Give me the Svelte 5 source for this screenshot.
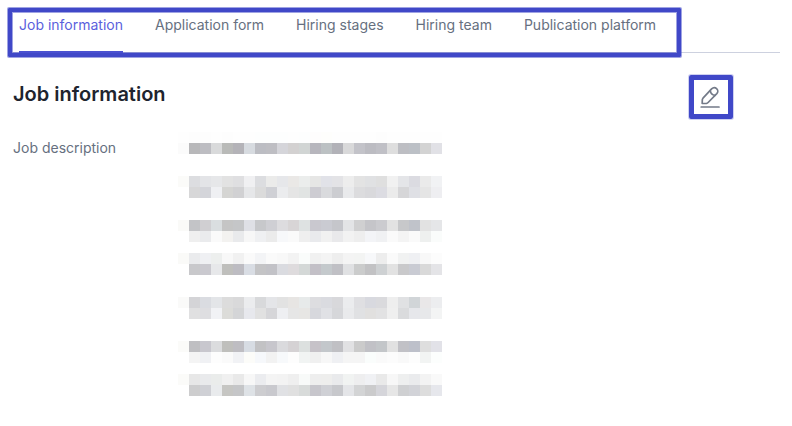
<script>
  let active = 'Job information';

  const tabs = [
    'Job information',
    'Application form',
    'Hiring stages',
    'Hiring team',
    'Publication platform'
  ];

  const cell = 11;
  const columns = 24;

  // Redacted description: each entry is one row of cells, keyed by its row index.
  const blocks = [
    { row: 0, colors: 'fefefe fdfdfd fdfdfd fefefe fdfdfd fefefe fefefe fdfefe fdfefe fdfefe fefefe fdfefe fefdfd fefefc fefefe fefefe fefefe fefefe fdfdfd fefefe fefefe fefefe fefefe fefefe' },
    { row: 1, colors: 'fbfbfb b8b8ba bdbdc2 d9dadb b9bab8 b4b3b8 d7dbe0 bcbdc3 bebec3 d5d5da d3d1d1 d1d5d4 b7b6bd bcc1c3 b2b2b8 d9d9da c3c3c9 bcbcc2 c0c0c6 dedede bdbec3 bcc0c6 d3d3d3 e1e1e6' },
    { row: 4, colors: 'fbfbf9 dcdde0 e3e4e7 e6e7e9 e2e2e2 dfdfe1 f0f0f2 dcdde0 ebebea e6e7ea eae8e6 ebedec e6e6e5 e1e2e8 e3e3e6 ededed e3e3e3 e0e1e3 dfdfdf f1f1f1 e4e5e8 dbdbe1 eaeaea f1f2f4' },
    { row: 5, colors: 'ffffff d7d7d8 d4d5da eff0f3 d5d5d3 d1d1d3 e6e7e9 dbdbdb cfd0d5 ebecee e5e5e5 e1e4e3 cdccd2 d9dadd cccdd1 e9eaec dcdcde d9d9dc dcdce2 ebebeb d6d6d8 dfe0e5 e5e5e5 eeeef1' },
    { row: 8, colors: 'fafaf8 c3c4c7 d0cfd2 dadee0 c5c5c5 c5c6c8 dfe0e6 c7c8cb cfcfd4 dddcdf d8d5d6 dee2e2 c9c8cf cacbd2 c5c6cb e3e4e6 d0d0d1 c5c5c9 cbcbcf e2e2e2 c7c8ca c0c3ca e2e2e2 e5e6e8' },
    { row: 9, colors: 'ffffff efefef eaebed fafafa f3f2f0 e9eaec f7f7f7 eff0f2 ebebeb f7f8fa fafafa efefef e9eaed f1f1f1 e9e9eb f2f2f2 eeeeee f3f4f7 f0f1f3 fafafa f4f4f4 fafafa eef0ef fafcfb' },
    { row: 11, colors: 'fafaf8 eaebed eff0f3 edefee f8f8f8 f1f1f1 fafafa f3f4f6 fafafa f8f8f8 f3f3f3 fafcfb f1f1f1 f4f4f4 eeeeee f4f4f4 f3f4f3 f7f8fa ededed fafafa f1f2f2 eff0f3 f8f8f8 fcfcfc' },
    { row: 12, colors: 'ffffff c8c8cb cac9cf e7e8ea bfbfbc bdbcc2 d9dde4 c4c4c6 c2c2c7 dadbe0 dedbdd d4d8d7 c3c0c7 c4c9cc c0c0c5 e0e1e3 cbcccc c2c2c4 ced1d3 e2e2e2 c9c9cb c9cbd3 d9d9d9 e4e4e7' },
    { row: 15, colors: 'fafaf9 d4d4d7 dadce1 e3e5e8 dcdcdc d9d9da ebecee d8d9db e4e5e8 e2e2e2 e7e5e3 e7eaea dddde0 dadbe0 d8d8db ebecee dfdfe2 d8d9df dadadd eeeeee e0e1e3 d1d5d8 e9e7e8 ecedef' },
    { row: 16, colors: 'ffffff e0e0e1 dedee1 f1f2f5 dcdcd9 d4d5d7 e7e8ed e1e1e1 d6d6d9 eeeff2 e6e6e6 e7e6e4 d7d8dd e0e1e5 d6d7da e9eaec e0e1e3 e1e0df e2e2e3 efefef dadbdd e6e7eb e7e8ea f3f4f4' },
    { row: 19, colors: 'fbfbf9 bfbfc2 c8c7ce dbdcde bfbfbc bebdc2 d7dce3 c2c2c4 c7c6cc dadadd d5d2d4 dce0df c6c2c8 c3c7cb c0c0c4 e1e1e3 cbcbcb c1c1c6 c3c6c9 e1e1e1 c1c1c6 bdc0ca dedede e2e2e8' },
    { row: 20, colors: 'ffffff f4f4f4 f0f1f4 fdfdfd fafafa f1f2f5 fcfcf9 f6f8fb f2f2f2 f7f9fb fdfdfd f1f4f3 f0f0f0 f7f7f7 eff0f3 f5f5f5 f5f5f5 fafdfc fafafa fcfcfc f9f9f9 fdfdfd f2f4f3 fcfefd' },
    { row: 22, colors: 'fbfbf9 e7e7e7 e9eaec eaeceb f0f0f0 e9e9e9 f7f7f7 ebecef f4f4f4 f3f3f3 efefef f8faf9 eeeeee eeeeed e9eaec f1f3f2 eeeeef f0f1f4 e9e9e9 f7f7f7 eeefef eaebed f3f3f3 f9f9f9' },
    { row: 23, colors: 'ffffff cdcdce cfd0d5 e9ebed c6c6c3 c5c6c8 dee2e6 cdcdd0 c9c9ce e0e1e4 e0e0e0 d8dbda c7c6cc cfd0d5 c7c8cc e4e5e8 d3d4d5 cbcbcc d5d5da e6e6e6 cfd0d2 d2d3d8 dddddd e6e7ec' }
  ];

  const cells = blocks.flatMap(({ row, colors }) =>
    colors.split(' ').map((color, column) => ({ x: column * cell, y: row * cell, fill: '#' + color }))
  );
</script>

<main>
  <header>
    <nav>
      {#each tabs as tab}
        <button class="tab" class:active={active === tab} on:click={() => active = tab}>{tab}</button>
      {/each}
    </nav>
  </header>

  <section>
    <div class="title">
      <h1>Job information</h1>
      <button class="edit" aria-label="Edit job information">
        <svg viewBox="0 0 24 24" width="24" height="24">
          <path d="M3.2 18.5 L3.3 14.8 Q3.4 13.9 4 13.2 L12.6 3.9 C14.1 2.4 16.2 2.3 17.6 3.6 C19.1 5 19.2 7.1 17.8 8.6 L9.1 17.5 Q8.4 18.2 7.5 18.3 Z" />
          <path d="M11.3 5.5 C11.6 8.3 13.2 10 16 10.3" />
          <path d="M2.2 22 H20" />
        </svg>
      </button>
    </div>

    <dl>
      <dt>Job description</dt>
      <dd>
        <svg class="redacted" width={columns * cell} height={24 * cell} shape-rendering="crispEdges">
          {#each cells as { x, y, fill }}
            <rect {x} {y} width={cell} height={cell} {fill} />
          {/each}
        </svg>
      </dd>
    </dl>
  </section>
</main>

<style>
  :global(body) {
    background: #fff;
  }

  main {
    padding: 8px 12px 30px 8px;
    font-family: Inter, "Liberation Sans", sans-serif;
    font-size: 14px;
    line-height: 20px;
    color: #667080;
  }

  button {
    font: inherit;
    color: inherit;
    background: none;
    border: none;
    margin: 0;
    padding: 0;
    cursor: pointer;
  }

  header {
    border-bottom: 1px solid #cdd1df;
  }

  nav {
    display: flex;
    gap: 32px;
    width: fit-content;
    padding: 0 21px 0 7px;
    margin-bottom: -5px;
    border: 4px solid #4048c8;
    border-radius: 1px;
    box-shadow: 0 0 0 1px #4048c880, inset 0 0 0 1px #4048c880;
  }

  .tab {
    padding: 3px 0 16px;
    border-bottom: 2px solid transparent;
    white-space: nowrap;
  }

  .active {
    color: #5b5fdd;
    border-color: #4a50d0;
  }

  section {
    padding: 22px 47px 0 5px;
  }

  .title {
    display: flex;
    align-items: center;
    justify-content: space-between;
  }

  h1 {
    margin: 0 0 6px;
    font-size: 20px;
    line-height: 28px;
    font-weight: 600;
    color: #20242e;
  }

  .edit {
    padding: 5px;
    border: 5px solid #4048c8;
    border-radius: 2px;
    box-shadow: 0 0 0 1px #4048c840;
  }

  .edit svg {
    display: block;
    fill: none;
    stroke: #737a88;
    stroke-width: 1.7;
    stroke-linecap: round;
    stroke-linejoin: round;
  }

  dl {
    display: grid;
    grid-template-columns: 165px 1fr;
    margin: 13px 0 0;
  }

  dt {
    padding-top: 6px;
  }

  dd {
    margin: 0;
  }

  .redacted {
    display: block;
  }
</style>
